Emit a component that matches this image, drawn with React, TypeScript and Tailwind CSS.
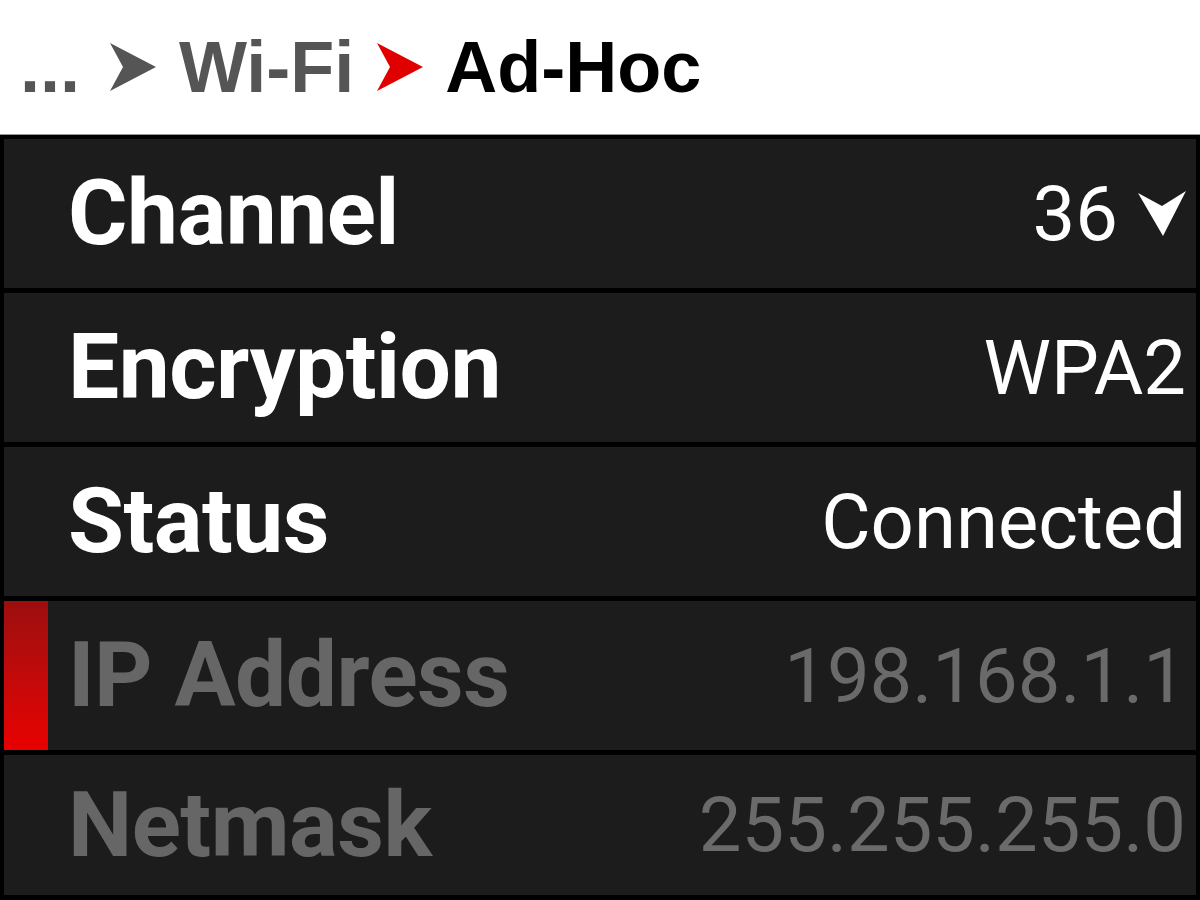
import React from 'react';

interface Row {
  label: string;
  value: string;
  dim?: boolean;
  selected?: boolean;
  dropdown?: boolean;
}

const rows: Row[] = [
  { label: 'Channel', value: '36', dropdown: true },
  { label: 'Encryption', value: 'WPA2' },
  { label: 'Status', value: 'Connected' },
  { label: 'IP Address', value: '198.168.1.1', dim: true, selected: true },
  { label: 'Netmask', value: '255.255.255.0', dim: true },
];

const Chevron: React.FC<{ color: string }> = ({ color }) => (
  <svg width="46" height="48" viewBox="0 0 46 48" className="shrink-0">
    <polygon points="0,0 46,24 0,48 13,24" fill={color} />
  </svg>
);

const DropArrow = () => (
  <svg width="48" height="45" viewBox="0 0 48 45" className="shrink-0">
    <polygon points="0,2 24,15 48,0 25,45" fill="#ffffff" />
  </svg>
);

const App: React.FC = () => {
  return (
    <div className="w-[1200px] h-[900px] flex flex-col bg-white overflow-hidden">
      {/* Breadcrumb */}
      <div className="h-[134px] flex items-center pl-[20px] font-['Liberation_Sans',Arial,sans-serif] font-bold text-[72px] leading-none">
        <span className="text-[#555555]">...</span>
        <span className="ml-[30px] mr-[23px]">
          <Chevron color="#555555" />
        </span>
        <span className="text-[#555555]">Wi-Fi</span>
        <span className="ml-[23px] mr-[22px]">
          <Chevron color="#e00000" />
        </span>
        <span className="text-black">Ad-Hoc</span>
      </div>

      {/* Settings list */}
      <div className="flex-1 flex flex-col gap-[5px] pt-[4px] px-[4px] pb-[5px] bg-black border-t border-[#9a9a9a] font-['Roboto',sans-serif]">
        {rows.map((row, i) => (
          <div
            key={row.label}
            className={`${i === rows.length - 1 ? 'flex-1' : 'h-[149px]'} flex items-center bg-[#1c1c1c]`}
          >
            {row.selected ? (
              <div className="self-stretch w-[44px] bg-gradient-to-b from-[#9c0e0e] to-[#e80000] mr-[20px]" />
            ) : (
              <div className="w-[64px]" />
            )}
            <span
              className={`font-bold text-[91px] leading-none tracking-[-0.5px] ${
                row.dim ? 'text-[#666666]' : 'text-white'
              }`}
            >
              {row.label}
            </span>
            <div className="ml-auto pr-[10px] flex items-center gap-[20px]">
              <span className={`text-[76px] leading-none ${row.dim ? 'text-[#6a6a6a]' : 'text-white'}`}>
                {row.value}
              </span>
              {row.dropdown && <DropArrow />}
            </div>
          </div>
        ))}
      </div>
    </div>
  );
};

export default App;
